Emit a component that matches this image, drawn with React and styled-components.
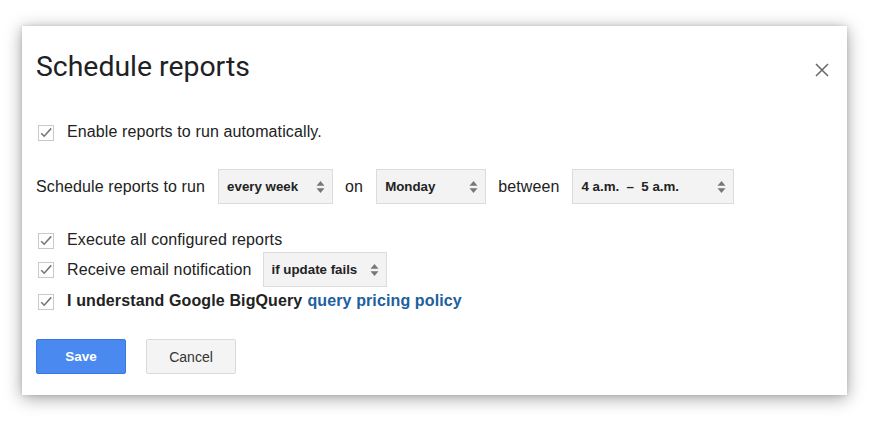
import React from "react";
import styled, { createGlobalStyle } from "styled-components";

const Global = createGlobalStyle`
  html, body { margin: 0; padding: 0; background: #fff; }
  body { width: 880px; height: 424px; overflow: hidden; font-family: "Liberation Sans", Arial, sans-serif; }
`;

const Page = styled.div`
  padding: 26px 0 0 22px;
`;

const Dialog = styled.div`
  width: 825px;
  height: 369px;
  box-sizing: border-box;
  background: #fff;
  box-shadow: 0 3px 16px rgba(0, 0, 0, 0.38), 0 0 4px rgba(0, 0, 0, 0.12);
  padding: 25px 12px 0 14px;
  display: flex;
  flex-direction: column;
`;

const Header = styled.div`
  display: flex;
  align-items: center;
  justify-content: space-between;
  height: 32px;
`;

const Title = styled.h1`
  margin: 0;
  font-family: Roboto, "Open Sans", sans-serif;
  font-weight: 400;
  font-size: 28.4px;
  line-height: 32px;
  color: #202124;
`;

const Close = styled.button`
  border: 0;
  background: none;
  padding: 0;
  width: 14px;
  height: 14px;
  margin: 6px 6px 0 0;
  display: flex;
  cursor: pointer;
`;

const Row = styled.div`
  display: flex;
  align-items: center;
  margin-top: ${(p) => p.$mt}px;
  min-height: 20px;
  font-size: 16px;
  color: #222;
`;

const Label = styled.span`
  font-size: 16px;
  line-height: 20px;
  letter-spacing: 0.12px;
  color: #222;
  margin-left: ${(p) => p.$ml ?? 0}px;
  margin-right: ${(p) => p.$mr ?? 0}px;
  font-weight: ${(p) => (p.$bold ? 700 : 400)};
`;

const Link = styled.a`
  color: #21609e;
  font-weight: 700;
  text-decoration: none;
  margin-left: 5px;
`;

const BoxWrap = styled.span`
  width: 16px;
  height: 16px;
  margin: 1px 13px 0 2px;
  display: inline-flex;
  flex: none;
`;

const SelectBox = styled.div`
  width: ${(p) => p.$w}px;
  height: 35px;
  box-sizing: border-box;
  border: 1px solid #dcdcdc;
  background: #f3f3f3;
  display: flex;
  align-items: center;
  justify-content: space-between;
  padding: 0 7px 0 8px;
  font-family: "Liberation Sans", Arial, sans-serif;
  font-size: 13.3px;
  font-weight: 700;
  color: #222;
`;

const ButtonRow = styled.div`
  display: flex;
  gap: 20px;
  margin-top: 28px;
`;

const Button = styled.button`
  width: 90px;
  height: 35px;
  box-sizing: border-box;
  border-radius: 2px;
  font-family: "Liberation Sans", Arial, sans-serif;
  cursor: pointer;
  border: 1px solid ${(p) => (p.$primary ? "#3a78e0" : "#dadada")};
  background: ${(p) => (p.$primary ? "#4a89f0" : "#f4f4f4")};
  color: ${(p) => (p.$primary ? "#fff" : "#333")};
  font-weight: ${(p) => (p.$primary ? 700 : 400)};
  font-size: ${(p) => (p.$primary ? 13.5 : 14)}px;
`;

const Checkbox = () => (
  <BoxWrap>
    <svg width="16" height="16" viewBox="0 0 16 16">
      <rect x="0.5" y="0.5" width="15" height="15" fill="#fff" stroke="#c9c9c9" />
      <path d="M3.2 8.2 L6.2 11.2 L13.2 3.4" fill="none" stroke="#777" strokeWidth="1.6" />
    </svg>
  </BoxWrap>
);

const Arrows = () => (
  <svg width="9" height="14" viewBox="0 0 9 14">
    <path d="M0.5 5.8 L4.5 1 L8.5 5.8 Z" fill="#777" />
    <path d="M0.5 8.2 L4.5 13 L8.5 8.2 Z" fill="#777" />
  </svg>
);

const Select = ({ w, children }) => (
  <SelectBox $w={w}>
    <span>{children}</span>
    <Arrows />
  </SelectBox>
);

export default function App() {
  return (
    <>
      <Global />
      <Page>
        <Dialog>
          <Header>
            <Title>Schedule reports</Title>
            <Close aria-label="Close">
              <svg width="14" height="14" viewBox="0 0 14 14">
                <path d="M1 1 L13 13 M13 1 L1 13" stroke="#666" strokeWidth="1.5" />
              </svg>
            </Close>
          </Header>

          <Row $mt={39}>
            <Checkbox />
            <Label>Enable reports to run automatically.</Label>
          </Row>

          <Row $mt={27}>
            <Label $mr={13}>Schedule reports to run</Label>
            <Select w={115}>every week</Select>
            <Label $ml={12} $mr={13}>on</Label>
            <Select w={110}>Monday</Select>
            <Label $ml={12} $mr={13}>between</Label>
            <Select w={162}>4 a.m. &nbsp;–&nbsp; 5 a.m.</Select>
          </Row>

          <Row $mt={26}>
            <Checkbox />
            <Label>Execute all configured reports</Label>
          </Row>

          <Row $mt={2}>
            <Checkbox />
            <Label $mr={11}>Receive email notification</Label>
            <Select w={124}>if update fails</Select>
          </Row>

          <Row $mt={4}>
            <Checkbox />
            <Label $bold>
              I understand Google BigQuery
              <Link href="#">query pricing policy</Link>
            </Label>
          </Row>

          <ButtonRow>
            <Button $primary>Save</Button>
            <Button>Cancel</Button>
          </ButtonRow>
        </Dialog>
      </Page>
    </>
  );
}
